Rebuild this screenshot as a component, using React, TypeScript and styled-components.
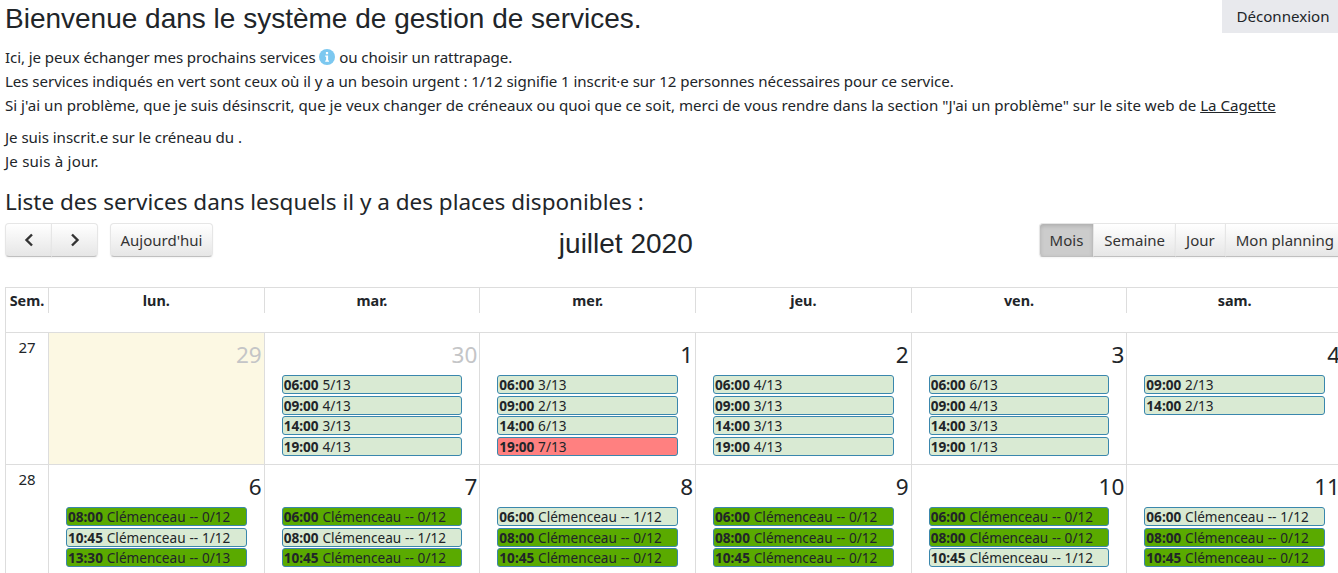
import React from "react";
import styled, { createGlobalStyle } from "styled-components";

const Global = createGlobalStyle`
  html, body { margin: 0; padding: 0; width: 1338px; height: 573px; overflow: hidden; background: #fff; }
  body { font-family: "Noto Sans", sans-serif; font-size: 15.1px; line-height: 24px; color: #212529; }
`;

const Page = styled.div`
  width: 1338px;
  height: 573px;
  overflow: hidden;
`;
const Top = styled.header`
  display: flex;
  justify-content: space-between;
  align-items: flex-start;
  padding-left: 5px;
  height: 45px;
`;
const Title = styled.h1`
  margin: 2px 0 0;
  font: 400 28px/34px "Liberation Sans", Arial, sans-serif;
  color: #212529;
`;
const Logout = styled.button`
  width: 116px;
  height: 33px;
  border: 0;
  background: #e8e9ed;
  color: #212529;
  font: inherit;
  padding: 0 0 2px 6px;
`;
const Intro = styled.div`
  padding: 0 5px;
`;
const Para = styled.p`
  margin: 0 0 8px;
`;
const Line = styled.div<{ $tracking?: number }>`
  white-space: nowrap;
  letter-spacing: ${(p) => p.$tracking ?? 0}px;
`;
const InfoIcon = styled.svg`
  width: 16px;
  height: 16px;
  vertical-align: -2px;
`;
const Link = styled.a`
  color: #212529;
  text-decoration: underline;
`;
const SubTitle = styled.h2`
  margin: 14px 0 0;
  padding-left: 5px;
  font-size: 22.5px;
  font-weight: 400;
  line-height: 30px;
  color: #212529;
`;
const Calendar = styled.section`
  width: 1338px;
  margin: 6px 0 0 5px;
`;
const Toolbar = styled.div`
  display: flex;
  align-items: flex-start;
  height: 64px;
  font-size: 15px;
`;
const ToolLeft = styled.div`
  display: flex;
  gap: 12px;
`;
const ToolCenter = styled.div`
  flex: 1;
  text-align: center;
  font: 400 28px/34px "Liberation Sans", Arial, sans-serif;
  color: #212529;
  padding-top: 4px;
`;
const Group = styled.div`
  display: flex;
`;
const ViewGroup = styled(Group)`
  margin-right: -2px;
`;
const ToolButton = styled.button<{ $active?: boolean; $pos?: "first" | "last" | "only" | "mid" }>`
  height: 34px;
  box-sizing: border-box;
  padding: 0 10px;
  margin-left: ${(p) => (p.$pos === "first" || p.$pos === "only" ? 0 : "-1px")};
  font: inherit;
  color: #333;
  display: flex;
  align-items: center;
  justify-content: center;
  border: 1px solid;
  border-color: #e6e6e6 #e6e6e6 #bfbfbf;
  background: ${(p) => (p.$active ? "#ccc" : "linear-gradient(to bottom, #fff, #e6e6e6)")};
  box-shadow: ${(p) =>
    p.$active
      ? "inset 0 2px 4px rgba(0,0,0,.15), 0 1px 2px rgba(0,0,0,.05)"
      : "inset 0 1px 0 rgba(255,255,255,.2), 0 1px 2px rgba(0,0,0,.05)"};
  border-radius: ${(p) =>
    p.$pos === "only" ? "4px" : p.$pos === "first" ? "4px 0 0 4px" : p.$pos === "last" ? "0 4px 4px 0" : "0"};
`;
const ArrowButton = styled(ToolButton)`
  width: 47px;
  padding: 0;
`;
const TodayButton = styled(ToolButton)`
  width: 103px;
  padding: 0;
`;
const Grid = styled.div`
  border-top: 1px solid #ddd;
  border-left: 1px solid #ddd;
`;
const Row = styled.div<{ $height: number }>`
  display: grid;
  grid-template-columns: 43px repeat(6, 1fr);
  height: ${(p) => p.$height}px;
  border-bottom: 1px solid #ddd;
`;
const HeadCell = styled.div`
  height: 25px;
  border-right: 1px solid #ddd;
  font-weight: 700;
  text-align: center;
  font-size: 14.4px;
  line-height: 25px;
`;
const WeekCell = styled.div`
  border-right: 1px solid #ddd;
  text-align: center;
  padding-top: 2px;
  font-size: 15px;
`;
const DayCell = styled.div<{ $today?: boolean }>`
  border-right: 1px solid #ddd;
  background: ${(p) => (p.$today ? "#fcf8e3" : "#fff")};
  min-width: 0;
`;
const DayNumber = styled.div<{ $other?: boolean }>`
  text-align: right;
  padding-right: 2px;
  height: 42px;
  font-size: 22.5px;
  line-height: 43px;
  color: ${(p) => (p.$other ? "#c4c5c7" : "#212529")};
`;
const Events = styled.div`
  display: flex;
  flex-direction: column;
  gap: 1.67px;
  padding: 0 17px;
`;
const Event = styled.div<{ $tone: "light" | "strong" | "red" }>`
  box-sizing: border-box;
  height: 19px;
  border: 1px solid #3a87ad;
  border-radius: 3px;
  padding-left: 1px;
  font-size: 13.6px;
  line-height: 17px;
  word-spacing: 0.3px;
  white-space: nowrap;
  overflow: hidden;
  color: #212529;
  background: ${(p) => (p.$tone === "light" ? "#d9ead3" : p.$tone === "strong" ? "#5aaa00" : "#ff8080")};
`;
const Time = styled.b`
  font-weight: 700;
`;

type Ev = [string, string, "light" | "strong" | "red"];
type Day = { n: number; other?: boolean; today?: boolean; events: Ev[] };

const l = (t: string, s: string): Ev => [t, s, "light"];
const c = (t: string, s: string, tone: "light" | "strong"): Ev => [t, `Clémenceau -- ${s}`, tone];

const week27: Day[] = [
  { n: 29, other: true, today: true, events: [] },
  { n: 30, other: true, events: [l("06:00", "5/13"), l("09:00", "4/13"), l("14:00", "3/13"), l("19:00", "4/13")] },
  { n: 1, events: [l("06:00", "3/13"), l("09:00", "2/13"), l("14:00", "6/13"), ["19:00", "7/13", "red"]] },
  { n: 2, events: [l("06:00", "4/13"), l("09:00", "3/13"), l("14:00", "3/13"), l("19:00", "4/13")] },
  { n: 3, events: [l("06:00", "6/13"), l("09:00", "4/13"), l("14:00", "3/13"), l("19:00", "1/13")] },
  { n: 4, events: [l("09:00", "2/13"), l("14:00", "2/13")] },
];
const week28: Day[] = [
  { n: 6, events: [c("08:00", "0/12", "strong"), c("10:45", "1/12", "light"), c("13:30", "0/13", "strong")] },
  { n: 7, events: [c("06:00", "0/12", "strong"), c("08:00", "1/12", "light"), c("10:45", "0/12", "strong")] },
  { n: 8, events: [c("06:00", "1/12", "light"), c("08:00", "0/12", "strong"), c("10:45", "0/12", "strong")] },
  { n: 9, events: [c("06:00", "0/12", "strong"), c("08:00", "0/12", "strong"), c("10:45", "0/12", "strong")] },
  { n: 10, events: [c("06:00", "0/12", "strong"), c("08:00", "0/12", "strong"), c("10:45", "1/12", "light")] },
  { n: 11, events: [c("06:00", "1/12", "light"), c("08:00", "0/12", "strong"), c("10:45", "0/12", "strong")] },
];

const Chevron = ({ dir }: { dir: "left" | "right" }) => (
  <svg width="12" height="14" viewBox="0 0 12 14" fill="none" stroke="#333" strokeWidth="2.4">
    <path d={dir === "left" ? "M9 1.5 3.5 7 9 12.5" : "M3 1.5 8.5 7 3 12.5"} />
  </svg>
);

const WeekRow = ({ num, days, height }: { num: number; days: Day[]; height: number }) => (
  <Row $height={height}>
    <WeekCell>{num}</WeekCell>
    {days.map((d) => (
      <DayCell key={d.n} $today={d.today}>
        <DayNumber $other={d.other}>{d.n}</DayNumber>
        <Events>
          {d.events.map((e) => (
            <Event key={e[0]} $tone={e[2]}>
              <Time>{e[0]}</Time> {e[1]}
            </Event>
          ))}
        </Events>
      </DayCell>
    ))}
  </Row>
);

export default function App() {
  return (
    <Page>
      <Global />
      <Top>
        <Title>Bienvenue dans le système de gestion de services.</Title>
        <Logout>Déconnexion</Logout>
      </Top>
      <Intro>
        <Para>
          <Line $tracking={-0.09}>
            Ici, je peux échanger mes prochains services{" "}
            <InfoIcon viewBox="0 0 16 16">
              <circle cx="8" cy="8" r="8" fill="#7cc8f0" />
              <rect x="6.9" y="3" width="2.2" height="2.2" fill="#fff" />
              <path d="M6.2 6.5h2.9v5h.9v1.2H6.2v-1.2h.9V7.7h-.9z" fill="#fff" />
            </InfoIcon>{" "}
            ou choisir un rattrapage.
          </Line>
          <Line $tracking={-0.057}>
            Les services indiqués en vert sont ceux où il y a un besoin urgent : 1/12 signifie 1 inscrit·e sur 12 personnes nécessaires pour ce service.
          </Line>
          <Line>
            Si j'ai un problème, que je suis désinscrit, que je veux changer de créneaux ou quoi que ce soit, merci de vous rendre dans la section "J'ai un problème" sur le site web de <Link>La Cagette</Link>
          </Line>
        </Para>
        <Para>
          <Line $tracking={-0.05}>Je suis inscrit.e sur le créneau du .</Line>
          <Line $tracking={0.2}>Je suis à jour.</Line>
        </Para>
      </Intro>
      <SubTitle>Liste des services dans lesquels il y a des places disponibles :</SubTitle>
      <Calendar>
        <Toolbar>
          <ToolLeft>
            <Group>
              <ArrowButton $pos="first"><Chevron dir="left" /></ArrowButton>
              <ArrowButton $pos="last"><Chevron dir="right" /></ArrowButton>
            </Group>
            <TodayButton $pos="only">Aujourd'hui</TodayButton>
          </ToolLeft>
          <ToolCenter>juillet 2020</ToolCenter>
          <ViewGroup>
            <ToolButton $pos="first" $active>Mois</ToolButton>
            <ToolButton $pos="mid">Semaine</ToolButton>
            <ToolButton $pos="mid">Jour</ToolButton>
            <ToolButton $pos="last">Mon planning</ToolButton>
          </ViewGroup>
        </Toolbar>
        <Grid>
          <Row $height={44}>
            {["Sem.", "lun.", "mar.", "mer.", "jeu.", "ven.", "sam."].map((h) => (
              <HeadCell key={h}>{h}</HeadCell>
            ))}
          </Row>
          <WeekRow num={27} days={week27} height={131} />
          <WeekRow num={28} days={week28} height={131} />
        </Grid>
      </Calendar>
    </Page>
  );
}
